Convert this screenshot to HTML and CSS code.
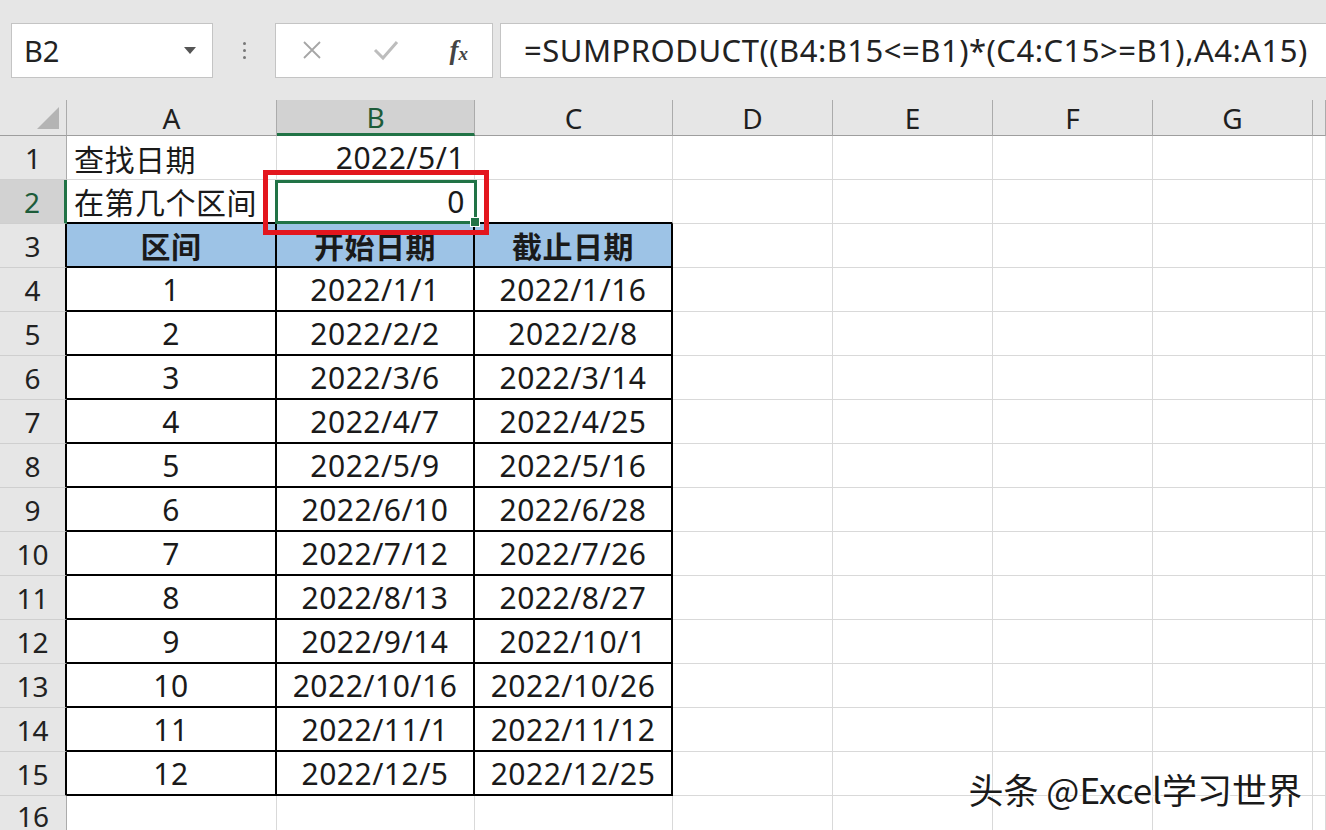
FILE: index.html
```html
<!DOCTYPE html>
<html lang="zh-CN">
<head>
    <meta charset="UTF-8">
    <title>区间查找</title>
    <link rel="stylesheet" href="styles.css">
</head>
<body>

    <div class="toolbar">
        <div class="name-box">
            <span>B2</span>
            <span class="caret"></span>
        </div>
        <div class="grip"><i></i><i></i><i></i></div>
        <div class="fx-buttons">
            <svg class="btn-icon" width="22" height="22" viewBox="0 0 22 22"><path d="M3 3 L19 19 M19 3 L3 19" stroke="#a6a6a6" stroke-width="1.8" fill="none"/></svg>
            <svg class="btn-icon" width="26" height="22" viewBox="0 0 26 22"><path d="M2 11 L10 19 L24 3" stroke="#bdbdbd" stroke-width="3" fill="none"/></svg>
            <span class="fx">f<sub>x</sub></span>
        </div>
        <div class="formula">=SUMPRODUCT((B4:B15&lt;=B1)*(C4:C15&gt;=B1),A4:A15)</div>
    </div>

    <div class="sheet">
        <!-- column headers -->
        <div class="corner"><span class="tri"></span></div>
        <div class="ch">A</div>
        <div class="ch sel">B</div>
        <div class="ch">C</div>
        <div class="ch">D</div>
        <div class="ch">E</div>
        <div class="ch">F</div>
        <div class="ch">G</div>
        <div class="ch"></div>

        <!-- row 1 -->
        <div class="rh">1</div>
        <div class="c left">查找日期</div>
        <div class="c right">2022/5/1</div>
        <div class="c"></div><div class="c"></div><div class="c"></div><div class="c"></div><div class="c"></div><div class="c"></div>

        <!-- row 2 -->
        <div class="rh sel">2</div>
        <div class="c left tt">在第几个区间</div>
        <div class="c right tt active">0
            <span class="handle"></span>
            <span class="mark"></span>
        </div>
        <div class="c tt"></div>
        <div class="c"></div><div class="c"></div><div class="c"></div><div class="c"></div><div class="c"></div>

        <!-- row 3: table head -->
        <div class="rh tl">3</div>
        <div class="c t head">区间</div>
        <div class="c t head">开始日期</div>
        <div class="c t head">截止日期</div>
        <div class="c"></div><div class="c"></div><div class="c"></div><div class="c"></div><div class="c"></div>

        <div class="rh tl">4</div>
        <div class="c t">1</div><div class="c t">2022/1/1</div><div class="c t">2022/1/16</div>
        <div class="c"></div><div class="c"></div><div class="c"></div><div class="c"></div><div class="c"></div>

        <div class="rh tl">5</div>
        <div class="c t">2</div><div class="c t">2022/2/2</div><div class="c t">2022/2/8</div>
        <div class="c"></div><div class="c"></div><div class="c"></div><div class="c"></div><div class="c"></div>

        <div class="rh tl">6</div>
        <div class="c t">3</div><div class="c t">2022/3/6</div><div class="c t">2022/3/14</div>
        <div class="c"></div><div class="c"></div><div class="c"></div><div class="c"></div><div class="c"></div>

        <div class="rh tl">7</div>
        <div class="c t">4</div><div class="c t">2022/4/7</div><div class="c t">2022/4/25</div>
        <div class="c"></div><div class="c"></div><div class="c"></div><div class="c"></div><div class="c"></div>

        <div class="rh tl">8</div>
        <div class="c t">5</div><div class="c t">2022/5/9</div><div class="c t">2022/5/16</div>
        <div class="c"></div><div class="c"></div><div class="c"></div><div class="c"></div><div class="c"></div>

        <div class="rh tl">9</div>
        <div class="c t">6</div><div class="c t">2022/6/10</div><div class="c t">2022/6/28</div>
        <div class="c"></div><div class="c"></div><div class="c"></div><div class="c"></div><div class="c"></div>

        <div class="rh tl">10</div>
        <div class="c t">7</div><div class="c t">2022/7/12</div><div class="c t">2022/7/26</div>
        <div class="c"></div><div class="c"></div><div class="c"></div><div class="c"></div><div class="c"></div>

        <div class="rh tl">11</div>
        <div class="c t">8</div><div class="c t">2022/8/13</div><div class="c t">2022/8/27</div>
        <div class="c"></div><div class="c"></div><div class="c"></div><div class="c"></div><div class="c"></div>

        <div class="rh tl">12</div>
        <div class="c t">9</div><div class="c t">2022/9/14</div><div class="c t">2022/10/1</div>
        <div class="c"></div><div class="c"></div><div class="c"></div><div class="c"></div><div class="c"></div>

        <div class="rh tl">13</div>
        <div class="c t">10</div><div class="c t">2022/10/16</div><div class="c t">2022/10/26</div>
        <div class="c"></div><div class="c"></div><div class="c"></div><div class="c"></div><div class="c"></div>

        <div class="rh tl">14</div>
        <div class="c t">11</div><div class="c t">2022/11/1</div><div class="c t">2022/11/12</div>
        <div class="c"></div><div class="c"></div><div class="c"></div><div class="c"></div><div class="c"></div>

        <div class="rh tl">15</div>
        <div class="c t">12</div><div class="c t">2022/12/5</div><div class="c t">2022/12/25</div>
        <div class="c"></div><div class="c"></div><div class="c"></div><div class="c"></div><div class="c"></div>

        <div class="rh last">16</div>
        <div class="c"></div><div class="c"></div><div class="c"></div>
        <div class="c"></div><div class="c"></div><div class="c"></div><div class="c"></div><div class="c"></div>
    </div>

    <div class="watermark">头条 @Excel学习世界</div>

</body>
</html>
```

FILE: styles.css
```css
* {
    margin: 0;
    padding: 0;
    box-sizing: border-box;
}

body {
    width: 1326px;
    height: 830px;
    overflow: hidden;
    background: #fff;
    font-family: "Noto Sans", "Noto Sans CJK SC", sans-serif;
    color: #1a1a1a;
    position: relative;
}

/* formula bar */
.toolbar {
    height: 100px;
    background: #e6e6e6;
    display: flex;
    align-items: center;
    padding-left: 11px;
}

.name-box {
    width: 202px;
    height: 55px;
    background: #fff;
    border: 1px solid #c4c4c4;
    display: flex;
    align-items: center;
    justify-content: space-between;
    padding: 0 16px 0 12px;
    font-size: 29px;
    color: #222;
}

.caret {
    width: 0;
    height: 0;
    border-left: 6px solid transparent;
    border-right: 6px solid transparent;
    border-top: 7px solid #555;
}

.grip {
    width: 62px;
    display: flex;
    flex-direction: column;
    align-items: center;
    gap: 4px;
}
.grip i {
    width: 3px;
    height: 3px;
    background: #777;
    border-radius: 50%;
}

.fx-buttons {
    width: 218px;
    height: 55px;
    background: #fff;
    border: 1px solid #c4c4c4;
    display: flex;
    align-items: center;
    justify-content: space-between;
    padding: 0 24px 0 25px;
}

.fx {
    font-family: "Liberation Serif", serif;
    font-style: italic;
    font-weight: bold;
    font-size: 27px;
    color: #444;
}
.fx sub {
    font-size: 19px;
    vertical-align: -1px;
}

.formula {
    flex: 1;
    height: 55px;
    margin-left: 7px;
    margin-right: -2px;
    background: #fff;
    border: 1px solid #c4c4c4;
    display: flex;
    align-items: center;
    padding-left: 23px;
    font-size: 31px;
    letter-spacing: 0.5px;
    color: #222;
    white-space: nowrap;
}

/* grid */
.sheet {
    display: grid;
    grid-template-columns: 67px 210px 198px 198px 160px 160px 160px 160px 1fr;
    grid-template-rows: 36px;
    grid-auto-rows: 44px;
    font-size: 30px;
    letter-spacing: 0.5px;
}

.corner,
.ch {
    background: #e6e6e6;
    border-right: 1px solid #ababab;
    border-bottom: 1px solid #9e9e9e;
    display: flex;
    align-items: center;
    justify-content: center;
    font-size: 28px;
    letter-spacing: 0;
    color: #1f1f1f;
}

.corner {
    align-items: flex-end;
    justify-content: flex-end;
    padding: 0 7px 6px 0;
}
.tri {
    width: 0;
    height: 0;
    border-left: 22px solid transparent;
    border-bottom: 22px solid #b4b4b4;
}

.ch.sel {
    background: #d2d2d2;
    color: #1d5c3a;
    border-bottom: 3px solid #217346;
}

.rh {
    background: #e6e6e6;
    border-right: 1px solid #ababab;
    border-bottom: 1px solid #cfcfcf;
    display: flex;
    align-items: center;
    justify-content: center;
    font-size: 28px;
    letter-spacing: 0;
    color: #222;
}
.rh.sel {
    background: #d2d2d2;
    color: #1d5c3a;
    border-right: 3px solid #217346;
}
.rh.tl {
    border-right: 2px solid #000;
}
.rh.last {
    align-items: flex-start;
    padding-top: 2px;
    line-height: 1.3;
}

.c {
    border-right: 1px solid #d9d9d9;
    border-bottom: 1px solid #d9d9d9;
    display: flex;
    align-items: center;
    justify-content: center;
    white-space: nowrap;
    position: relative;
}
.c.left {
    justify-content: flex-start;
    padding-left: 7px;
}
.c.right {
    justify-content: flex-end;
    padding-right: 9px;
}
.c.tt {
    border-bottom: 2px solid #000;
}
.c.t {
    border-right: 2px solid #000;
    border-bottom: 2px solid #000;
}
.c.head {
    background: #9dc3e6;
    font-weight: bold;
}

/* selected cell and its markup */
.c.active {
    z-index: 2;
}
.active::before {
    content: "";
    position: absolute;
    left: -2px;
    top: 0;
    right: -3px;
    bottom: -2px;
    border: 3px solid #217346;
}
.handle {
    position: absolute;
    right: -6px;
    bottom: -5px;
    width: 10px;
    height: 10px;
    background: #217346;
    border: 1px solid #fff;
}
.mark {
    position: absolute;
    left: -14px;
    top: -10px;
    width: 226px;
    height: 65px;
    border: 5px solid #e3161e;
}

.watermark {
    position: absolute;
    right: 24px;
    bottom: 16px;
    font-family: "Noto Sans CJK SC", sans-serif;
    font-size: 35px;
    color: #1a1a1a;
    text-shadow: 2px 2px 1px #fff, -1px 1px 1px rgba(255, 255, 255, 0.8);
}
```
